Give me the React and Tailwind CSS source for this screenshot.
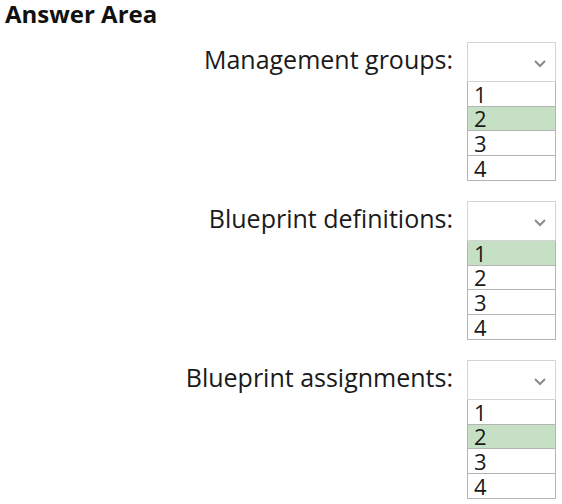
import React from 'react';

const groups = [
  { label: 'Management groups:', selected: '2' },
  { label: 'Blueprint definitions:', selected: '1' },
  { label: 'Blueprint assignments:', selected: '2' },
];

function Chevron() {
  return (
    <svg width="14" height="9" viewBox="0 0 14 9" className="text-[#8a8a8a]">
      <path d="M2 2 L7 7 L12 2" fill="none" stroke="currentColor" strokeWidth="2" />
    </svg>
  );
}

function Picker({ label, selected }) {
  return (
    <div className="flex justify-end items-start">
      <div className="h-[40px] flex items-center pr-[14px] pb-[6px] text-[25px] leading-none text-[#1a1a1a]">{label}</div>
      <div className="w-[89px] mr-[6px]">
        <div className="h-[40px] border border-[#d4d4d4] bg-white flex items-center justify-end pr-[8px] pt-[3px]">
          <Chevron />
        </div>
        <div className="border border-t-0 border-[#b4b4b4]">
          {['1', '2', '3', '4'].map((n, i) => (
            <div
              key={n}
              className={
                'h-[24.5px] flex items-center pl-[6px] text-[22px] leading-[20px] text-[#1a1a1a] ' +
                (i < 3 ? 'border-b border-[#b4b4b4] ' : '') +
                (n === selected ? 'bg-[#c6e0c6]' : 'bg-white')
              }
            >
              {n}
            </div>
          ))}
        </div>
      </div>
    </div>
  );
}

export default function App() {
  return (
    <div className="w-[562px] h-[504px] bg-white overflow-hidden" style={{ fontFamily: '"Open Sans", "Noto Sans", sans-serif' }}>
      <div className="pl-[5px] text-[24px] font-bold text-[#111] leading-[32px] -mt-[2px]">Answer Area</div>
      <div className="flex flex-col gap-[20px] mt-[12px]">
        {groups.map((g) => (
          <Picker key={g.label} label={g.label} selected={g.selected} />
        ))}
      </div>
    </div>
  );
}
